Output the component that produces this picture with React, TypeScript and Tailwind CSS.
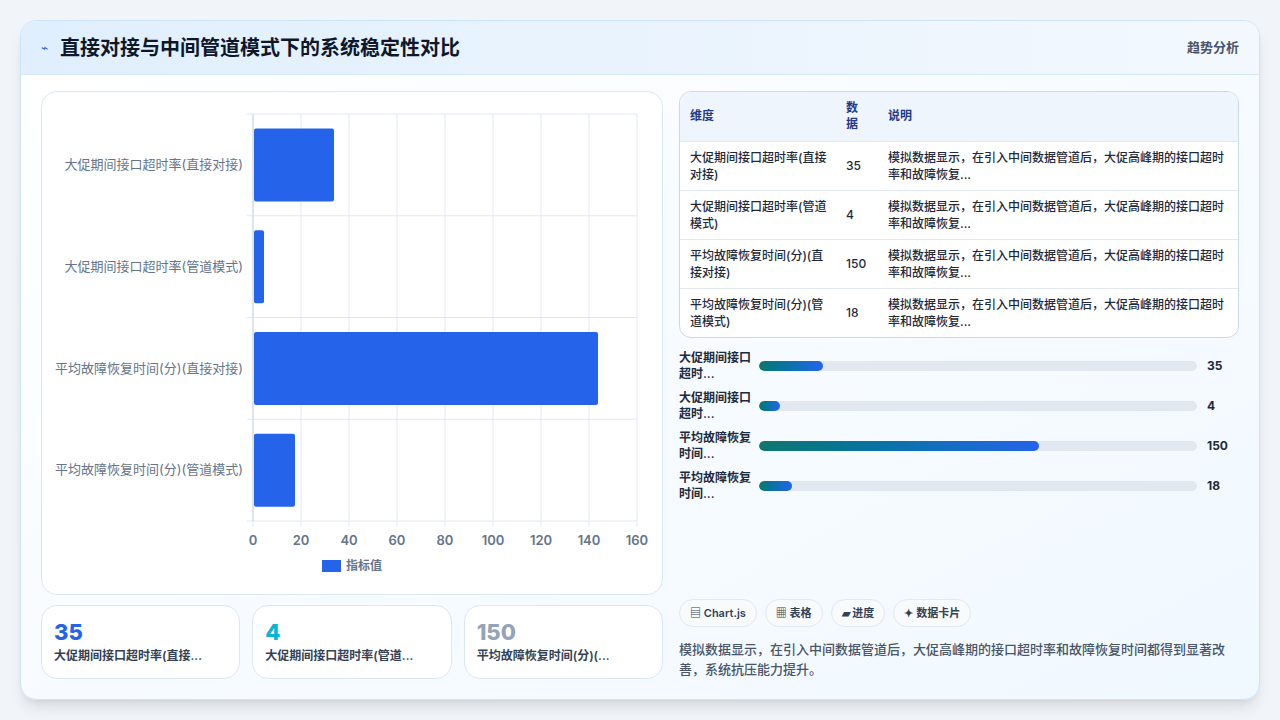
import React from 'react';

const rows = [
  { name: '大促期间接口超时率(直接对接)', short: '大促期间接口超时...', v: 35, bar: 80, pct: 14.5 },
  { name: '大促期间接口超时率(管道模式)', short: '大促期间接口超时...', v: 4, bar: 10, pct: 4.8 },
  { name: '平均故障恢复时间(分)(直接对接)', short: '平均故障恢复时间...', v: 150, bar: 344, pct: 64 },
  { name: '平均故障恢复时间(分)(管道模式)', short: '平均故障恢复时间...', v: 18, bar: 41, pct: 7.5 },
];
const desc = '模拟数据显示，在引入中间数据管道后，大促高峰期的接口超时率和故障恢复...';

function Chart() {
  const x0 = 211, y0 = 22, w = 384, h = 407;
  const ticks = [0, 20, 40, 60, 80, 100, 120, 140, 160];
  return (
    <svg width="622" height="504" className="block">
      {ticks.map((t, i) => (
        <g key={t}>
          <line x1={x0 + i * 48} y1={y0} x2={x0 + i * 48} y2={y0 + h + 6} stroke="#e2e8f0" />
          <text x={x0 + i * 48} y={y0 + h + 24} textAnchor="middle" fontSize="13" fontWeight="600" fill="#64748b">{t}</text>
        </g>
      ))}
      {[0, 1, 2, 3, 4].map(i => (
        <line key={i} x1={x0 - 6} y1={y0 + i * 101.75} x2={x0 + w} y2={y0 + i * 101.75} stroke="#e2e8f0" />
      ))}
      {rows.map((r, i) => (
        <g key={r.name}>
          <rect x={x0 + 1} y={y0 + i * 101.75 + 14.5} width={r.bar} height={73} rx="2" fill="#2563eb" />
          <text x={x0 - 10} y={y0 + i * 101.75 + 55} textAnchor="end" fontSize="13" fill="#64748b">{r.name}</text>
        </g>
      ))}
      <line x1={x0} y1={y0} x2={x0} y2={y0 + h} stroke="#cbd5e1" />
      <rect x="280" y="468" width="19" height="12" fill="#2563eb" />
      <text x="304" y="478" fontSize="12" fontWeight="600" fill="#64748b">指标值</text>
    </svg>
  );
}

export default function App() {
  return (
    <div className="w-[1280px] h-[720px] bg-[#f1f5f9] p-5" style={{ fontFamily: 'Inter, "Noto Sans CJK SC", sans-serif' }}>
      <div className="h-[680px] rounded-2xl border border-[#cfe3f7] bg-gradient-to-br from-white to-[#f0f8ff] shadow-lg overflow-hidden flex flex-col">
        <div className="h-14 flex items-center justify-between px-5 bg-gradient-to-r from-[#e0effd] to-[#f3f8fe] border-b border-[#d6e7f8]">
          <div className="flex items-center gap-3">
            <span className="text-[#2563eb] text-xs">⌁</span>
            <h1 className="text-[20px] font-bold text-[#0f172a]">直接对接与中间管道模式下的系统稳定性对比</h1>
          </div>
          <span className="text-[13px] font-semibold text-[#475569]">趋势分析</span>
        </div>
        <div className="flex-1 flex gap-4 px-5 pt-4 pb-5">
          <div className="w-[622px] flex flex-col gap-2.5">
            <div className="h-[504px] rounded-2xl border border-[#dbe7f3] bg-white">
              <Chart />
            </div>
            <div className="grid grid-cols-3 gap-3">
              {[
                { v: '35', c: 'text-[#2563eb]', l: '大促期间接口超时率(直接...' },
                { v: '4', c: 'text-[#06b6d4]', l: '大促期间接口超时率(管道...' },
                { v: '150', c: 'text-[#94a3b8]', l: '平均故障恢复时间(分)(...' },
              ].map(s => (
                <div key={s.v} className="h-[74px] rounded-2xl border border-[#dbe7f3] bg-white px-3 pt-3">
                  <div className={`text-[22px] font-extrabold leading-7 ${s.c}`}>{s.v}</div>
                  <div className="text-xs font-semibold text-[#334155] mt-0.5">{s.l}</div>
                </div>
              ))}
            </div>
          </div>
          <div className="flex-1 flex flex-col">
            <div className="rounded-xl border border-[#cbd8e6] overflow-hidden bg-white">
              <table className="w-full text-xs">
                <thead>
                  <tr className="bg-[#eef5fd] text-[#1e3a8a] font-semibold h-[49px]">
                    <td className="px-2.5 w-[160px]">维度</td>
                    <td className="px-1.5 w-[40px] leading-4">数<br />据</td>
                    <td className="px-2">说明</td>
                  </tr>
                </thead>
                <tbody>
                  {rows.map(r => (
                    <tr key={r.name} className="border-t border-[#e2e8f0] h-[49px] text-[#1e293b] font-medium">
                      <td className="px-2.5 leading-[17px]">{r.name}</td>
                      <td className="px-1.5">{r.v}</td>
                      <td className="px-2 pr-3 leading-[17px]">{desc}</td>
                    </tr>
                  ))}
                </tbody>
              </table>
            </div>
            <div className="flex flex-col gap-2 mt-3">
              {rows.map(r => (
                <div key={r.name} className="flex items-center h-8">
                  <div className="w-[80px] text-xs font-semibold text-[#1e293b] leading-4">{r.short.slice(0, 6)}<br />{r.short.slice(6)}</div>
                  <div className="w-[438px] h-2.5 rounded-full bg-[#e2e8f0] overflow-hidden">
                    <div className="h-full rounded-full bg-gradient-to-r from-[#0f766e] to-[#2563eb]" style={{ width: `${r.pct}%` }} />
                  </div>
                  <div className="ml-2.5 text-xs font-bold text-[#1e293b]">{r.v}</div>
                </div>
              ))}
            </div>
            <div className="mt-auto">
              <div className="flex gap-2">
                {['▤ Chart.js', '▦ 表格', '▰ 进度', '✦ 数据卡片'].map(c => (
                  <span key={c} className="h-7 px-2.5 flex items-center rounded-full border border-[#e2e8f0] bg-[#f8fafc] text-[11px] font-semibold text-[#334155]">{c}</span>
                ))}
              </div>
              <p className="mt-3 text-[13px] font-medium leading-5 text-[#475569]">模拟数据显示，在引入中间数据管道后，大促高峰期的接口超时率和故障恢复时间都得到显著改善，系统抗压能力提升。</p>
            </div>
          </div>
        </div>
      </div>
    </div>
  );
}
